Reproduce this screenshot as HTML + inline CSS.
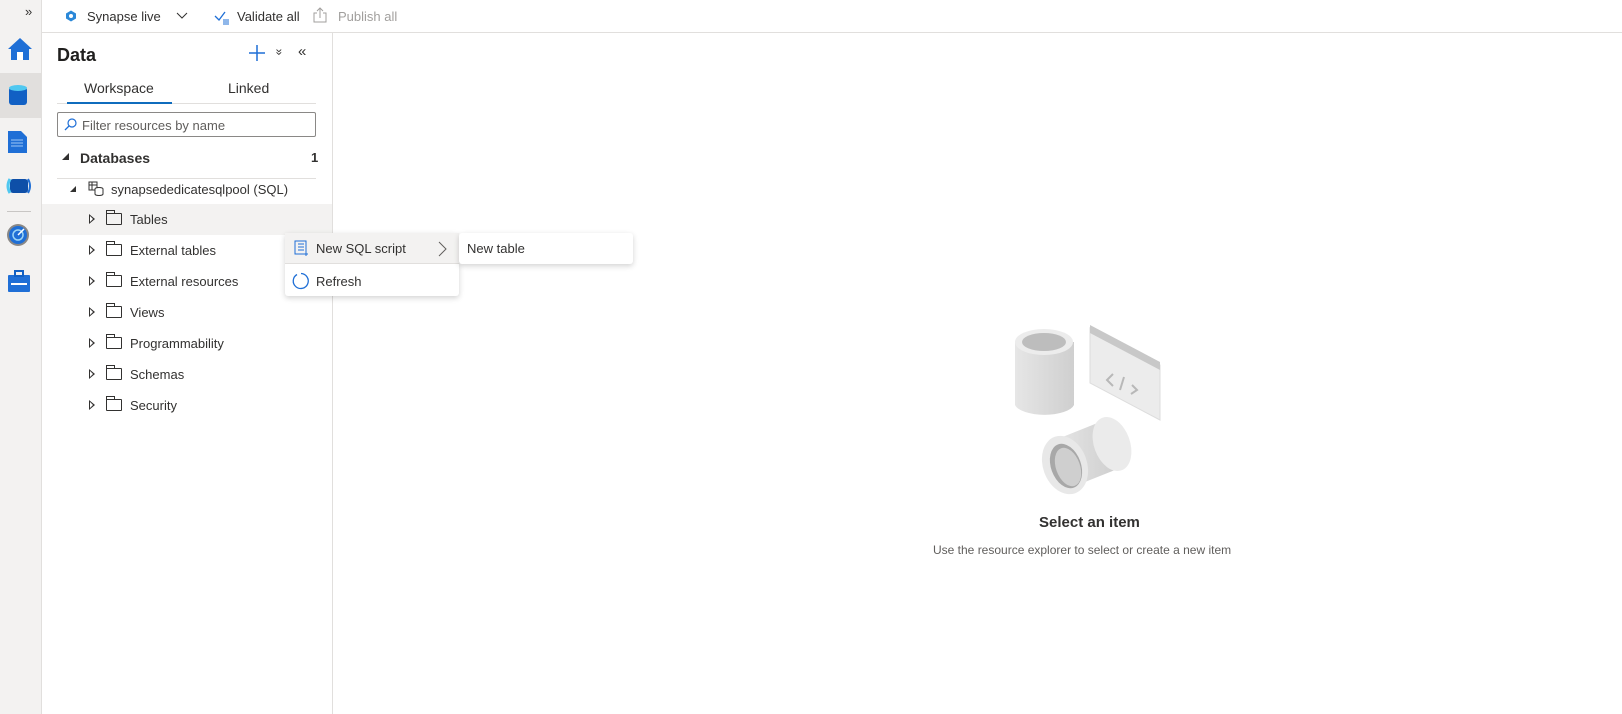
<!DOCTYPE html>
<html><head><style>
*{box-sizing:border-box;margin:0;padding:0}
body{width:1622px;height:714px;overflow:hidden;background:#fff;font-family:"Liberation Sans",sans-serif;color:#323130;font-size:13px;position:relative}
.abs{position:absolute}
.nav{left:0;top:0;width:42px;height:714px;background:#f3f2f1;border-right:1px solid #e1dfdd}
.top{left:42px;top:0;width:1580px;height:33px;border-bottom:1px solid #e1dfdd;background:#fff}
.top span{position:absolute;top:9px;font-size:13px}
.panel{left:42px;top:33px;width:291px;height:681px;border-right:1px solid #e1dfdd}
.row{position:absolute;left:42px;width:290px;height:31px;font-size:13px}
.row .t{position:absolute;left:88px;top:8px}
.row .arr{position:absolute;left:47px;top:10px;width:0;height:0;border-top:5px solid transparent;border-bottom:5px solid transparent;border-left:6px solid #323130}
.row .arr:after{content:"";position:absolute;left:-5px;top:-3px;border-top:3px solid transparent;border-bottom:3px solid transparent;border-left:3px solid #fff}
.row .fold{position:absolute;left:64px;top:9px;width:16px;height:12px;border:1px solid #323130;border-radius:1px}
.row .fold:before{content:"";position:absolute;left:-1px;top:-4px;width:7px;height:3px;border:1px solid #323130;border-bottom:none}
.menu{background:#fff;box-shadow:0 2px 6px rgba(0,0,0,.18);border-radius:3px}
.tri{position:absolute;width:0;height:0;border-left:7px solid transparent;border-bottom:7px solid #323130}
</style></head><body>
<div class="abs nav">
 <div class="abs" style="left:25px;top:4px;font-size:13px">»</div>
 <svg class="abs" style="left:7px;top:37px" width="26" height="24"><path d="M13 1 L25 12 L22 12 L22 23 L4 23 L4 12 L1 12Z" fill="#1f6fd6"/><rect x="10" y="15" width="6" height="8" fill="#fff"/></svg>
 <div class="abs" style="left:0;top:73px;width:42px;height:45px;background:#e1dfdd"></div>
 <svg class="abs" style="left:8px;top:84px" width="22" height="24"><rect x="1" y="3" width="18" height="18" rx="3" fill="#1160c4"/><ellipse cx="10" cy="4" rx="9" ry="3" fill="#50c8f0"/></svg>
 <svg class="abs" style="left:7px;top:130px" width="22" height="24"><path d="M1 1h13l6 6v16H1z" fill="#1f6fd6"/><path d="M4 10h12M4 13h12M4 16h12" stroke="#9cc7f5"/></svg>
 <svg class="abs" style="left:6px;top:176px" width="26" height="20"><rect x="4" y="3" width="18" height="14" rx="3" fill="#0e4fa8"/><path d="M4 3 Q0 10 4 17" stroke="#50c8f0" stroke-width="3" fill="none"/><path d="M22 3 Q26 10 22 17" stroke="#1f6fd6" stroke-width="2" fill="none"/></svg>
 <div class="abs" style="left:7px;top:211px;width:24px;border-top:1px solid #c8c6c4"></div>
 <svg class="abs" style="left:6px;top:223px" width="24" height="24"><circle cx="12" cy="12" r="11" fill="#8a8886"/><circle cx="12" cy="12" r="9" fill="#1f6fd6"/><circle cx="12" cy="12" r="5" fill="none" stroke="#9cd5f5" stroke-width="1.5"/><path d="M12 12 L18 6" stroke="#fff" stroke-width="1.5"/></svg>
 <svg class="abs" style="left:7px;top:269px" width="24" height="24"><rect x="1" y="6" width="22" height="17" rx="1" fill="#1f6fd6"/><rect x="8" y="2" width="8" height="5" fill="none" stroke="#1160c4" stroke-width="2"/><path d="M4 15h16" stroke="#fff" stroke-width="2"/></svg>
</div>
<div class="abs top">
 <svg class="abs" style="left:23px;top:10px" width="12" height="12"><path d="M6 0.5 L11 3.5 V8.5 L6 11.5 L1 8.5 V3.5Z" fill="#2b88d8"/><circle cx="6" cy="6" r="2" fill="#fff"/></svg>
 <span style="left:45px">Synapse live</span>
 <svg class="abs" style="left:134px;top:12px" width="12" height="8"><path d="M1 1 L6 6 L11 1" stroke="#323130" fill="none"/></svg>
 <svg class="abs" style="left:172px;top:11px" width="16" height="14"><path d="M1 5 L5 9 L11 1" stroke="#1f6fd6" fill="none" stroke-width="1.3"/><path d="M9 9h6M9 11h6M9 13h6" stroke="#1f6fd6"/></svg>
 <span style="left:195px">Validate all</span>
 <svg class="abs" style="left:271px;top:7px" width="14" height="16"><path d="M4 6H1v9h12V6h-3M7 11V1M4 4l3-3 3 3" stroke="#a19f9d" fill="none"/></svg>
 <span style="left:296px;color:#a19f9d">Publish all</span>
</div>
<div class="abs panel">
 <div class="abs" style="left:15px;top:12px;font-size:18px;font-weight:bold;color:#201f1e">Data</div>
 <svg class="abs" style="left:207px;top:12px" width="16" height="16"><path d="M8 0v16M0 8h16" stroke="#1f6fd6" stroke-width="1.5"/></svg>
 <div class="abs" style="left:234px;top:12px;font-size:12px;transform:rotate(90deg)">»</div>
 <div class="abs" style="left:256px;top:10px;font-size:15px">«</div>
 <div class="abs" style="left:42px;top:47px;font-size:14px">Workspace</div>
 <div class="abs" style="left:186px;top:47px;font-size:14px">Linked</div>
 <div class="abs" style="left:15px;top:70px;width:259px;border-top:1px solid #e1dfdd"></div>
 <div class="abs" style="left:25px;top:69px;width:105px;height:2px;background:#0f6cbd"></div>
 <div class="abs" style="left:15px;top:79px;width:259px;height:25px;border:1px solid #8a8886;border-radius:2px"></div>
 <svg class="abs" style="left:22px;top:85px" width="13" height="13"><circle cx="8" cy="5" r="4" stroke="#1f6fd6" fill="none" stroke-width="1.2"/><path d="M5 8 L1 12" stroke="#1f6fd6" stroke-width="1.3"/></svg>
 <div class="abs" style="left:40px;top:85px;color:#605e5c">Filter resources by name</div>
 <div class="tri" style="left:20px;top:120px"></div>
 <div class="abs" style="left:38px;top:117px;font-size:14px;font-weight:bold">Databases</div>
 <div class="abs" style="left:269px;top:117px;font-weight:bold">1</div>
 <div class="abs" style="left:15px;top:145px;width:259px;border-top:1px solid #e1dfdd"></div>
 <div class="tri" style="left:28px;top:153px;border-left-width:6px;border-bottom-width:6px"></div>
 <svg class="abs" style="left:46px;top:147px" width="16" height="16"><rect x="1" y="2" width="8" height="8" fill="none" stroke="#323130"/><path d="M1 5h8M4 2v8" stroke="#323130"/><ellipse cx="11" cy="9" rx="4" ry="1.5" fill="#fff" stroke="#323130"/><path d="M7 9v5a4 1.5 0 0 0 8 0V9" fill="#fff" stroke="#323130"/></svg>
 <div class="abs" style="left:69px;top:149px">synapsededicatesqlpool (SQL)</div>
</div>
<div class="row" style="top:204px;background:#f3f2f1"><div class="arr"></div><div class="fold"></div><div class="t">Tables</div></div>
<div class="row" style="top:235px"><div class="arr"></div><div class="fold"></div><div class="t">External tables</div></div>
<div class="row" style="top:266px"><div class="arr"></div><div class="fold"></div><div class="t">External resources</div></div>
<div class="row" style="top:297px"><div class="arr"></div><div class="fold"></div><div class="t">Views</div></div>
<div class="row" style="top:328px"><div class="arr"></div><div class="fold"></div><div class="t">Programmability</div></div>
<div class="row" style="top:359px"><div class="arr"></div><div class="fold"></div><div class="t">Schemas</div></div>
<div class="row" style="top:390px"><div class="arr"></div><div class="fold"></div><div class="t">Security</div></div>

<div class="abs menu" style="left:285px;top:233px;width:174px;height:63px">
 <div class="abs" style="left:0;top:0;width:174px;height:31px;background:#f3f2f1;border-bottom:1px solid #e1dfdd"></div>
 <svg class="abs" style="left:8px;top:7px" width="16" height="18"><rect x="2" y="1" width="11" height="13" fill="none" stroke="#1f6fd6"/><path d="M5 4h6M5 7h6M5 10h6" stroke="#1f6fd6"/><path d="M11 14h4M13 12v4" stroke="#1f6fd6"/></svg>
 <div class="abs" style="left:31px;top:8px">New SQL script</div>
 <svg class="abs" style="left:153px;top:8px" width="9" height="16"><path d="M1 1 L8 8 L1 15" stroke="#605e5c" fill="none"/></svg>
 <svg class="abs" style="left:7px;top:39px" width="18" height="18"><path d="M5 2.5 A7.5 7.5 0 1 0 9 1.5" stroke="#1f6fd6" fill="none" stroke-width="1.3"/></svg>
 <div class="abs" style="left:31px;top:41px">Refresh</div>
</div>
<div class="abs menu" style="left:459px;top:233px;width:174px;height:31px">
 <div class="abs" style="left:8px;top:8px">New table</div>
</div>

<svg class="abs" style="left:1010px;top:320px" width="160" height="180">
 <defs><linearGradient id="g" x1="0" x2="1"><stop offset="0" stop-color="#e6e6e6"/><stop offset="1" stop-color="#cfcfcf"/></linearGradient></defs>
 <path d="M5 22 V85 A30 12 0 0 0 64 85 V22Z" fill="url(#g)"/>
 <ellipse cx="34" cy="22" rx="29" ry="13" fill="#ececec"/>
 <ellipse cx="34" cy="22" rx="22" ry="9" fill="#bdbdbd"/>
 <path d="M80 8 L150 45 V100 L80 63Z" fill="#ececec" stroke="#ddd"/>
 <path d="M80 5 L150 42 V50 L80 13Z" fill="#c8c8c8"/>
 <path d="M103 54 L97 60 L103 66 M114 57 L110 70 M122 65 L127 70 L121 74" stroke="#b8b8b8" fill="none" stroke-width="2"/>
 <path d="M45 120 L95 100 L105 150 L55 170Z" fill="url(#g)"/>
 <ellipse cx="102" cy="124" rx="18" ry="28" transform="rotate(-20 102 124)" fill="#ebebeb"/>
 <ellipse cx="55" cy="145" rx="22" ry="30" transform="rotate(-20 55 145)" fill="#e8e8e8"/>
 <ellipse cx="56" cy="146" rx="15" ry="23" transform="rotate(-20 56 146)" fill="#a8a8a8"/>
 <ellipse cx="58" cy="147" rx="12" ry="20" transform="rotate(-20 58 147)" fill="#cfcfcf"/>
</svg>
<div class="abs" style="left:1039px;top:514px;font-size:15px;font-weight:bold;color:#323130">Select an item</div>
<div class="abs" style="left:933px;top:543px;font-size:12px;color:#605e5c">Use the resource explorer to select or create a new item</div>
</body></html>
